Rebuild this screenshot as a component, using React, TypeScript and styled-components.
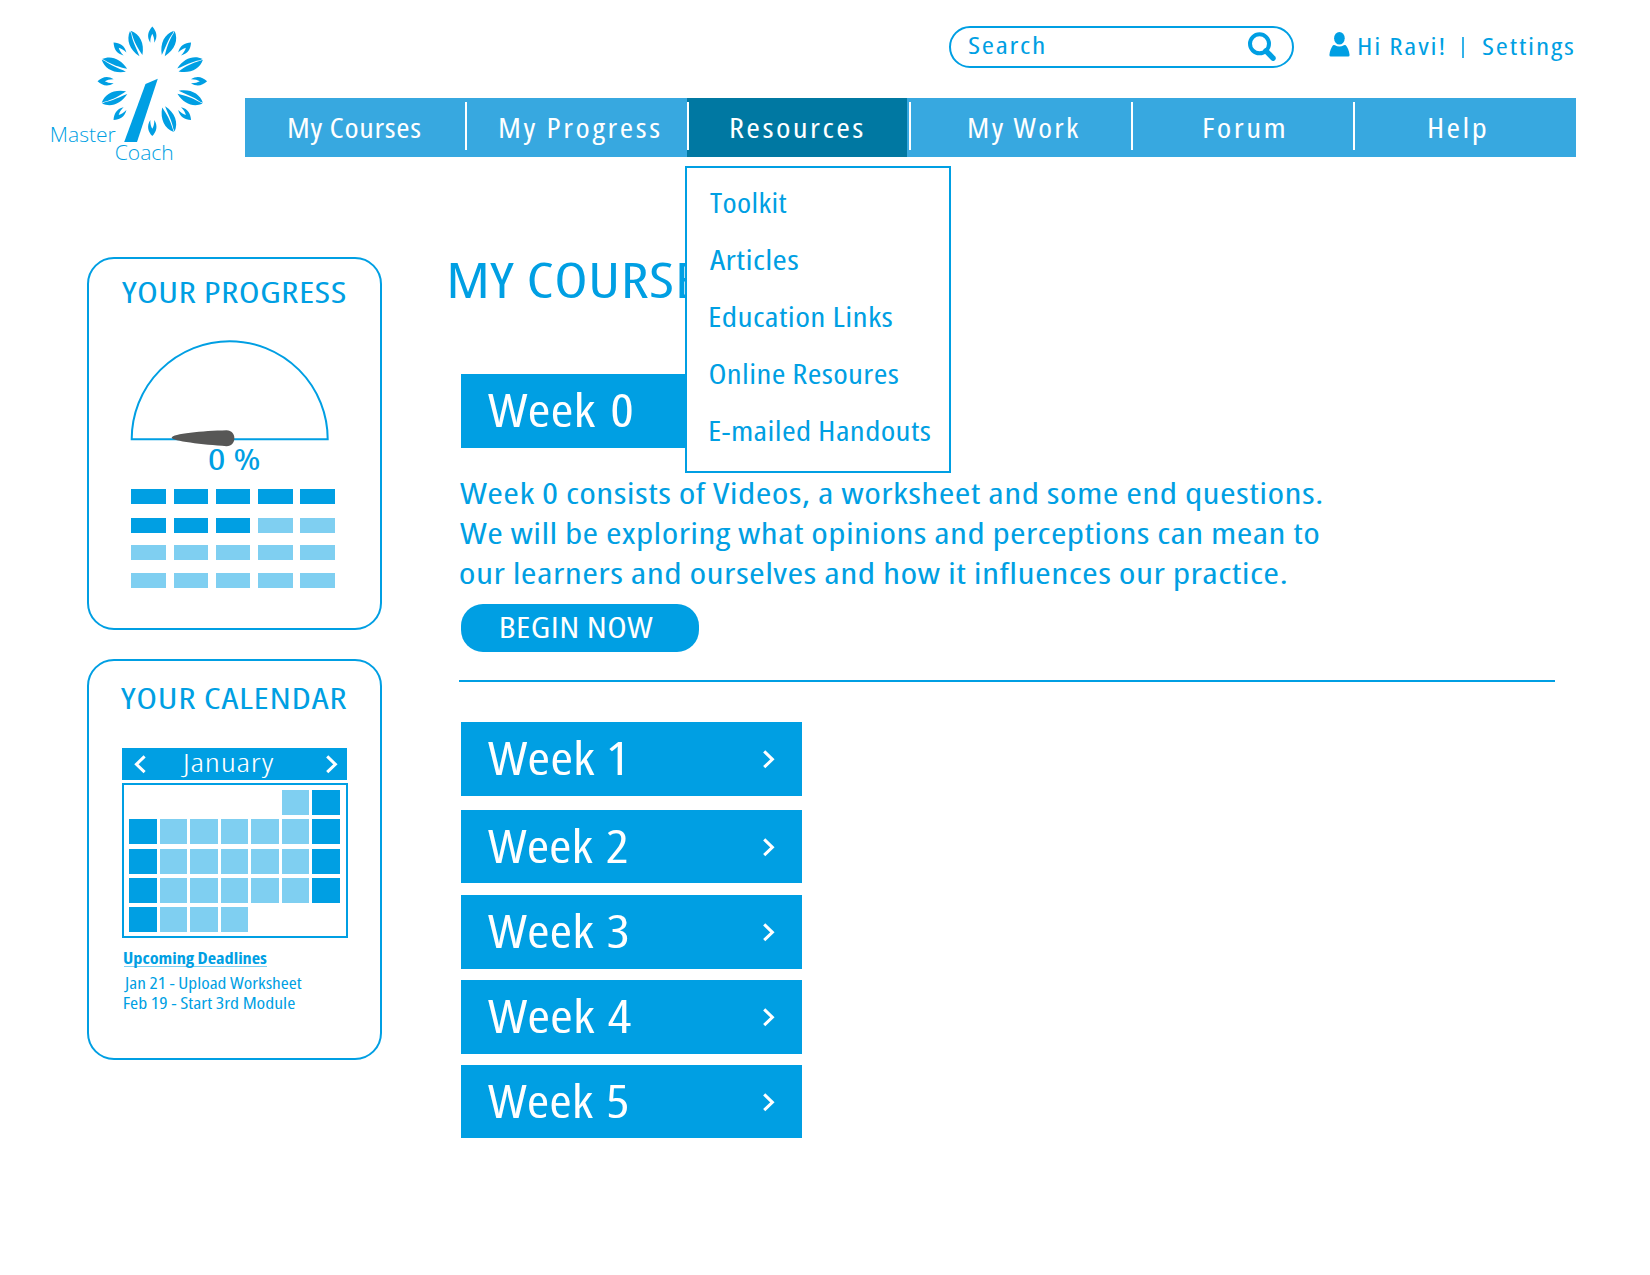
import React from 'react';
import styled, { createGlobalStyle } from 'styled-components';

const BLUE = '#009fe3';
const LIGHT = '#7fcff1';
const FAMILY = '"Open Sans", "Noto Sans", sans-serif';

const GlobalStyle = createGlobalStyle`
  * { box-sizing: border-box; }
  body { margin: 0; background: #fff; font-family: ${FAMILY}; color: ${BLUE}; }
`;

/* ---------- text ---------- */

const LabelBox = styled.div<{ $w: number; $base: number; $left: number }>`
  flex: none;
  width: ${p => p.$w}px;
  height: ${p => p.$base}px;
  margin-left: ${p => p.$left}px;
`;

const LabelInk = styled.span<{ $size: number; $line: number; $weight: number; $track: number; $gap: number; $color: string }>`
  display: block;
  width: max-content;
  white-space: pre;
  transform-origin: 0 0;
  font-size: ${p => p.$size}px;
  font-weight: ${p => p.$weight};
  font-stretch: semi-condensed;
  font-kerning: normal;
  letter-spacing: ${p => p.$track}px;
  word-spacing: ${p => p.$gap}px;
  line-height: ${p => p.$line}px;
  color: ${p => p.$color};
`;

const ctx = document.createElement('canvas').getContext('2d') as any;

/* Measured at ten times the size, since glyph bounds come back in whole pixels. */
function measure(text: string, size: number, weight: number, track: number, gap: number) {
  ctx.font = `${weight} ${size * 10}px ${FAMILY}`;
  ctx.fontStretch = 'semi-condensed';
  ctx.letterSpacing = `${track * 10}px`;
  ctx.wordSpacing = `${gap * 10}px`;
  const m = ctx.measureText(text);
  return { left: m.actualBoundingBoxLeft / 10, right: m.actualBoundingBoxRight / 10 };
}

type LabelProps = {
  children: string; w: number; size: number; base: number;
  left?: number; weight?: number; track?: number; gap?: number; color?: string;
};

/* Text whose glyphs fill exactly `w` pixels; the bottom of its box is the baseline. */
function Label({ children, w, size, base, left = 0, weight = 390, track = 0, gap = 0, color = BLUE }: LabelProps) {
  const m = measure(children, size, weight, track, gap);
  const s = w / (m.left + m.right);
  const ascent = Math.round(1.069 * size);
  const descent = Math.round(0.293 * size);
  return (
    <LabelBox $w={w} $base={base} $left={left}>
      <LabelInk $size={size} $line={ascent + descent} $weight={weight} $track={track} $gap={gap} $color={color}
        style={{ transform: `translate(${m.left * s}px, ${base - ascent}px) scaleX(${s})` }}>
        {children}
      </LabelInk>
    </LabelBox>
  );
}

/* ---------- header ---------- */

const Page = styled.div`
  width: 1650px;
  height: 1275px;
  overflow: hidden;
  background: #fff;
`;

const Header = styled.header`
  display: grid;
  grid-template-columns: 245px 1331px;
  height: 257px;
`;

const Utility = styled.div`
  display: flex;
  height: 98px;
  padding-top: 26px;
  padding-left: 704px;
`;

const SearchBox = styled.div`
  display: flex;
  width: 345px;
  height: 42px;
  border: 2px solid ${BLUE};
  border-radius: 21px;
`;

const SearchIcon = styled.svg`
  margin: 3px 0 0 202px;
`;

const UserIcon = styled.svg`
  margin: 5px 0 0 34px;
`;

const Pipe = styled.span`
  width: 2px;
  height: 21px;
  margin: 11px 0 0 18px;
  background: ${BLUE};
  opacity: 0.8;
`;

const Nav = styled.nav`
  display: flex;
  height: 58.5px;
  background: #37a8e0;
`;

const NavItem = styled.div<{ $active?: boolean; $first?: boolean }>`
  position: relative;
  display: flex;
  width: 220px;
  margin-right: ${p => (p.$first ? 0 : 2)}px;
  background: ${p => (p.$active ? '#0078a2' : 'transparent')};
`;

const Divider = styled.span`
  flex: none;
  width: 2px;
  height: 48px;
  margin-top: 4px;
  background: #fff;
`;

const Menu = styled.div`
  position: absolute;
  z-index: 5;
  left: -2px;
  top: 68px;
  width: 266px;
  height: 307px;
  padding-left: 23px;
  border: 2px solid ${BLUE};
  background: #fff;
`;

/* ---------- body ---------- */

const Body = styled.div`
  display: flex;
  padding-left: 87px;
`;

const Side = styled.aside`
  display: flex;
  flex-direction: column;
  gap: 29px;
  width: 295px;
`;

const Card = styled.section<{ $h: number }>`
  height: ${p => p.$h}px;
  border: 2px solid ${BLUE};
  border-radius: 27px;
`;

const Gauge = styled.svg`
  display: block;
  margin: 35px 0 0 41px;
`;

const BarRow = styled.div<{ $top: number }>`
  display: flex;
  gap: 7.8px;
  margin: ${p => p.$top}px 0 0 42.3px;
`;

const Bar = styled.span<{ $on: boolean }>`
  width: 34.5px;
  height: 15px;
  background: ${p => (p.$on ? BLUE : LIGHT)};
`;

const MonthBar = styled.div`
  display: flex;
  width: 225px;
  height: 32px;
  margin: 38.8px 0 3px 33px;
  background: ${BLUE};
`;

const Days = styled.div`
  display: grid;
  grid-template-columns: repeat(7, 27.7px);
  grid-auto-rows: 25px;
  gap: 4.2px 2.8px;
  width: 226px;
  height: 155px;
  margin-left: 32.6px;
  padding: 5.2px 0 0 5.6px;
  border: 2px solid ${BLUE};
`;

const Day = styled.span<{ $kind: string }>`
  background: ${p => (p.$kind === 'w' ? BLUE : p.$kind === 'd' ? LIGHT : 'transparent')};
`;

const Rule = styled.div`
  width: 143px;
  height: 1px;
  margin: 2px 0 0 35px;
  background: ${LIGHT};
`;

const Main = styled.main`
  display: flex;
  flex-direction: column;
  margin-left: 76.5px;
`;

const Week = styled.div<{ $h: number; $top: number }>`
  display: flex;
  width: 341.4px;
  height: ${p => p.$h}px;
  margin: ${p => p.$top}px 0 0 2.5px;
  background: ${BLUE};
`;

const Begin = styled.div`
  width: 237.5px;
  height: 48px;
  margin: 20px 0 0 2.5px;
  border-radius: 22px;
  background: ${BLUE};
`;

const Separator = styled.div`
  width: 1096px;
  height: 2px;
  margin-top: 28px;
  background: ${BLUE};
`;

const ChevronSvg = styled.svg<{ $x: number; $y: number }>`
  flex: none;
  margin: ${p => p.$y}px 0 0 ${p => p.$x}px;
`;

function Chevron({ x, y, back = false }: { x: number; y: number; back?: boolean }) {
  return (
    <ChevronSvg $x={x} $y={y} width="12" height="19" viewBox="0 0 12 19">
      <path d={back ? 'M10.6 1.4 L2.4 9.3 L10.6 17.2' : 'M1.2 1.4 L9.4 9.3 L1.2 17.2'}
        fill="none" stroke="#fff" strokeWidth="3" />
    </ChevronSvg>
  );
}

/* ---------- logo ---------- */

const SMALL = 'M0 -54.8 C4.2 -50 5.9 -45 2 -38.6 C2.1 -42.5 1.3 -45 0 -47.5 C-1.3 -45 -2.1 -42.5 -2 -38.6 C-5.9 -45 -4.2 -50 0 -54.8 Z';
const BIG_L = 'M-0.4 -55 C-7.6 -48.5 -8.4 -38 -1.8 -28 C-1.2 -36 -2.4 -44 -0.3 -52 Z';
const BIG_R = 'M0.4 -55 C7.6 -48.5 8.2 -38 1.4 -28 C-0.2 -36 -1 -43 0.3 -52 Z';

function Logo() {
  return (
    <svg width="245" height="170" viewBox="0 0 245 170" fill={BLUE}>
      <g transform="translate(152.3 81.3)">
        {[0, 45, 90, 135, 180, 225, 270, 315].map(a => (
          <path key={a} d={SMALL} transform={`rotate(${a})`} />
        ))}
        {[23.5, 66.5, 113.5, 156.5, 246.5, 293.5, 336.5].map(a => (
          <g key={a} transform={`rotate(${a})`}>
            <path d={BIG_L} />
            <path d={BIG_R} />
          </g>
        ))}
      </g>
      <path d="M145.5 84 L157.8 78.8 L137 142 L124.2 142 Z" />
      <g fontFamily={FAMILY} fontSize="19.8" fontWeight="360">
        <text x="49.8" y="142.2" textLength="66" lengthAdjust="spacingAndGlyphs">Master</text>
        <text x="114.8" y="160.2" textLength="59" lengthAdjust="spacingAndGlyphs">Coach</text>
      </g>
    </svg>
  );
}

/* ---------- data ---------- */

const NAV = [
  { t: 'My Courses', left: 43.5, w: 131.3, track: 0.6 },
  { t: 'My Progress', left: 32.5, w: 159.3, track: 2.2 },
  { t: 'Resources', left: 42.2, w: 131.5, track: 2 },
  { t: 'My Work', left: 57.7, w: 109.3, track: 2 },
  { t: 'Forum', left: 70.5, w: 80.2, track: 2 },
  { t: 'Help', left: 74.3, w: 56.4, track: 2 },
];

const MENU = [
  { t: 'Toolkit', w: 76.5, base: 45 },
  { t: 'Articles', w: 88, base: 57 },
  { t: 'Education Links', w: 182, base: 56.5 },
  { t: 'Online Resoures', w: 188, base: 57 },
  { t: 'E-mailed Handouts', w: 220, base: 57 },
];

const BARS = [
  { top: 19, on: 5 },
  { top: 14, on: 3 },
  { top: 12, on: 0 },
  { top: 13, on: 0 },
];

const DAYS = '.....dw' + 'wdddddw' + 'wdddddw' + 'wdddddw' + 'wddd...';

const WEEKS = [
  { t: 'Week 1', w: 134.5, top: 40, h: 74, gap: 1 },
  { t: 'Week 2', w: 139, top: 14, h: 73, gap: 2.5 },
  { t: 'Week 3', w: 140, top: 12, h: 74, gap: 2.5 },
  { t: 'Week 4', w: 143, top: 11, h: 74, gap: 2.5 },
  { t: 'Week 5', w: 139.5, top: 11, h: 73, gap: 2.5 },
];

const PARAGRAPH = [
  { t: 'Week 0 consists of Videos, a worksheet and some end questions.', w: 861.5, base: 55.7 },
  { t: 'We will be exploring what opinions and perceptions can mean to', w: 858.5, base: 40 },
  { t: 'our learners and ourselves and how it influences our practice.', w: 826, base: 40 },
];

export default function App() {
  return (
    <Page>
      <GlobalStyle />
      <Header>
        <Logo />
        <div>
          <Utility>
            <SearchBox>
              <Label left={18} w={74.5} size={22.8} base={26} track={1.3}>Search</Label>
              <SearchIcon width="30" height="32" viewBox="0 0 30 32">
                <circle cx="13.5" cy="12.8" r="9.5" fill="none" stroke={BLUE} strokeWidth="4" />
                <path d="M20 19.8 L27 27.2" stroke={BLUE} strokeWidth="5.4" strokeLinecap="round" />
              </SearchIcon>
            </SearchBox>
            <UserIcon width="24" height="27" viewBox="0 0 24 27" fill={BLUE}>
              <ellipse cx="11.4" cy="7.3" rx="5.3" ry="6.3" />
              <path d="M1.4 24 C1.7 19.5 3.6 16.5 5 14.2 Q6 13.6 7 14.2 C9.8 16 13 16 15.8 14.2 Q16.8 13.6 17.8 14.2 C19.5 16.5 21.2 19.5 21.6 24 Q21.6 25.6 20.2 25.6 L2.8 25.6 Q1.4 25.6 1.4 24 Z" />
            </UserIcon>
            <Label left={7.3} w={84.3} size={22.8} base={29.2} track={1.4}>Hi Ravi!</Label>
            <Pipe />
            <Label left={19} w={90} size={22.8} base={29.2} track={1.4}>Settings</Label>
          </Utility>
          <Nav>
            {NAV.map((n, i) => (
              <NavItem key={n.t} $first={i === 0} $active={n.t === 'Resources'}>
                {i > 0 && <Divider />}
                <Label left={n.left} w={n.w} size={27} base={39.9} track={n.track} color="#fff">{n.t}</Label>
                {n.t === 'Resources' && (
                  <Menu>
                    {MENU.map(m => (
                      <Label key={m.t} w={m.w} size={27} base={m.base} track={0.3}>{m.t}</Label>
                    ))}
                  </Menu>
                )}
              </NavItem>
            ))}
          </Nav>
        </div>
      </Header>
      <Body>
        <Side>
          <Card $h={373}>
            <Label left={33.3} w={223} size={29.5} base={44} track={0.3}>YOUR PROGRESS</Label>
            <Gauge width="202" height="110" viewBox="130 338 202 110">
              <path d="M131.7 439.2 A98 98 0 0 1 327.7 439.2 Z" fill="none" stroke={BLUE} strokeWidth="2" />
              <path d="M171.7 437.8 C171.7 433.5 203 430.8 226.5 430.2 C237 430.2 237 446.2 226.5 446.2 C203 444.7 171.7 441 171.7 437.8 Z" fill="#575756" />
            </Gauge>
            <Label left={119.5} w={50.5} size={29} base={21.7}>0 %</Label>
            {BARS.map((r, i) => (
              <BarRow key={i} $top={r.top}>
                {[0, 1, 2, 3, 4].map(c => <Bar key={c} $on={c < r.on} />)}
              </BarRow>
            ))}
          </Card>
          <Card $h={401}>
            <Label left={32} w={225.5} size={29.5} base={48.2} track={0.5}>YOUR CALENDAR</Label>
            <MonthBar>
              <Chevron x={11.5} y={7} back />
              <Label left={35.5} w={92.7} size={26.2} base={23.9} weight={350} track={0.5} color="#fff">January</Label>
              <Chevron x={52.5} y={7} />
            </MonthBar>
            <Days>
              {DAYS.split('').map((k, i) => <Day key={i} $kind={k} />)}
            </Days>
            <Label left={35} w={142.5} size={16} base={26.3} weight={700}>Upcoming Deadlines</Label>
            <Rule />
            <Label left={34.5} w={177.5} size={15.8} base={22} weight={410}>Jan 21 - Upload Worksheet</Label>
            <Label left={35} w={170.5} size={15.8} base={20} weight={410}>Feb 19 - Start 3rd Module</Label>
          </Card>
        </Side>
        <Main>
          <Label left={-8.3} w={273} size={49.5} base={40.6} track={0.5}>MY COURSES</Label>
          <Week $top={76.7} $h={73.7}>
            <Label left={26.5} w={144} size={46.3} base={53.2} gap={4} color="#fff">Week 0</Label>
          </Week>
          {PARAGRAPH.map(l => (
            <Label key={l.t} left={1.7} w={l.w} size={29} base={l.base} track={0.3}>{l.t}</Label>
          ))}
          <Begin>
            <Label left={39.5} w={152} size={28.8} base={34.2} track={0.4} color="#fff">BEGIN NOW</Label>
          </Begin>
          <Separator />
          {WEEKS.map(k => (
            <Week key={k.t} $top={k.top} $h={k.h}>
              <Label left={26.5} w={k.w} size={46.3} base={53.3} gap={k.gap} color="#fff">{k.t}</Label>
              <Chevron x={275.9 - k.w} y={28.3} />
            </Week>
          ))}
        </Main>
      </Body>
    </Page>
  );
}
